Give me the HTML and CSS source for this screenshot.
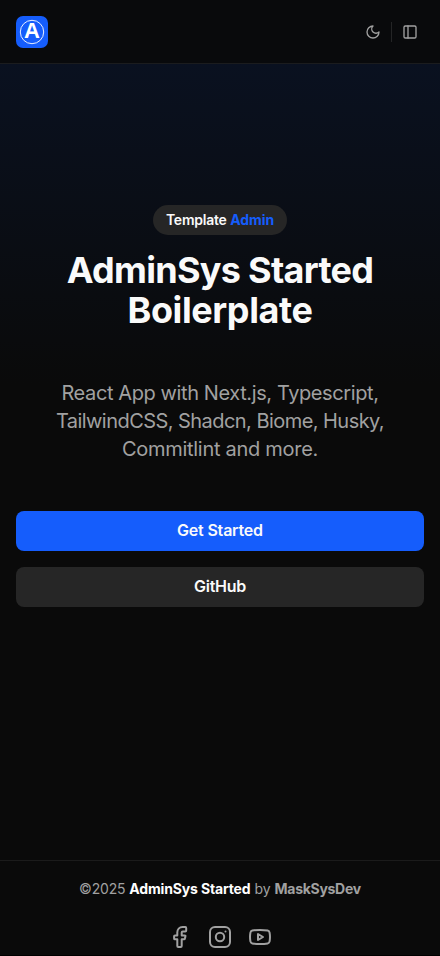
FILE: index.html
```html
<!DOCTYPE html>
<html lang="en">
<head>
<meta charset="utf-8">
<title>AdminSys Started</title>
<link rel="stylesheet" href="styles.css">
</head>
<body>
<div class="page">
  <header class="header">
    <a class="logo" aria-label="Home">
      <svg width="32" height="32" viewBox="0 0 32 32"><rect width="32" height="32" rx="7" fill="#155dfc"/><circle cx="16" cy="16" r="11.7" fill="none" stroke="#fff" stroke-width=".9"/><text class="logo-letter" x="16" y="22" text-anchor="middle">A</text></svg>
    </a>
    <nav class="tools">
      <svg class="tool" viewBox="0 0 24 24"><path d="M12 3a6 6 0 0 0 9 9 9 9 0 1 1-9-9Z"/></svg>
      <span class="divider"></span>
      <svg class="tool" viewBox="0 0 24 24"><rect x="3" y="3" width="18" height="18" rx="2"/><path d="M9 3v18"/></svg>
    </nav>
  </header>
  <main class="hero">
    <div class="badge"><span class="badge-a">Template</span> <span class="badge-b">Admin</span></div>
    <h1 class="title"><span class="title-a">AdminSys Started</span><br><span class="title-b">Boilerplate</span></h1>
    <p class="lead"><span class="lead-a">React App with Next.js, Typescript,</span><br><span class="lead-b">TailwindCSS, Shadcn, Biome, Husky,</span><br><span class="lead-c">Commitlint and more.</span></p>
    <div class="actions">
      <a class="button primary">Get Started</a>
      <a class="button github">GitHub</a>
    </div>
  </main>
  <footer class="footer">
    <p class="credit"><span class="year">©2025</span> <strong class="name">AdminSys Started</strong> <span class="by">by</span> <strong class="author">MaskSysDev</strong></p>
    <div class="socials">
      <svg class="social" viewBox="0 0 24 24"><path d="M7 10.400c-.7 0-.9.2-.9.900v2.100c0 .7.2.900.9.900h2.300v6.800c0 .7.2.900.9.900h2.600c.7 0 .9-.2.900-.9v-6.800h2.300c.6 0 .8-.1.900-.700l.5-2.100c.2-.8 0-1.100-.8-1.100h-2.900V7.600c0-.6.5-1.100 1.100-1.100h2.500c.7 0 .9-.2.900-.9V2.900c0-.7-.2-.9-.9-.900h-2.700C11.300 2 9.300 4.400 9.300 7.500v2.900Z"/></svg>
      <svg class="social" viewBox="0 0 24 24"><rect x="2" y="2" width="20" height="20" rx="5"/><circle cx="12" cy="12" r="4.200"/><path d="M17.500 6.500h.01"/></svg>
      <svg class="social" viewBox="0 0 24 24"><path d="M12 19c2.900 0 5.500-.18 7.700-.6 1.200-.25 1.700-.8 1.900-2 .5-2.900.5-5.900 0-8.800-.2-1.200-.7-1.750-1.900-2-4.400-.8-11-.8-15.400 0-1.200.25-1.700.8-1.900 2-.5 2.900-.5 5.900 0 8.800.2 1.200.7 1.750 1.900 2 2.200.42 4.800.6 7.700.6Z"/><path d="M10 9v6l5-3Z"/></svg>
    </div>
  </footer>
</div>
</body>
</html>
```
FILE: styles.css
```css
* { box-sizing: border-box; }
html { background: #000; }
body { margin: 0; font-family: Inter, "Liberation Sans", sans-serif; color: #fafafa; height: 956px; overflow: hidden; }
.page { height: 955px; display: flex; flex-direction: column; background: #0a0a0a; }
.header { flex: none; height: 64px; padding: 0 16px; display: flex; align-items: center; justify-content: space-between; border-bottom: 1px solid #1b1c1e; background: #090a0c; }
.logo, .logo svg { display: block; }
.logo-letter { font: 700 22px "Liberation Sans", sans-serif; fill: #fff; }
.tools { display: flex; align-items: center; gap: 10px; padding-right: 6px; }
.tool { width: 16px; height: 16px; fill: none; stroke: #a1a1a1; stroke-width: 2; stroke-linecap: round; stroke-linejoin: round; }
.divider { width: 1px; height: 20px; background: #242526; }
.hero { flex: 1; display: flex; flex-direction: column; align-items: center; padding: 141px 16px 0; background: linear-gradient(#0a1120, #0a0a0a 320px); }
.badge { width: 134px; height: 30px; border-radius: 15px; background: #262626; font-size: 14px; line-height: 30px; font-weight: 500; text-align: center; white-space: nowrap; letter-spacing: -.08px; }
.badge-a { font-weight: 600; letter-spacing: -.25px; }
.badge-b { color: #155dfc; font-weight: 700; }
.title { margin: 15px 0 0; font-size: 36px; line-height: 40px; font-weight: 700; text-align: center; white-space: nowrap; }
.title-a { letter-spacing: -.7px; }
.title-b { letter-spacing: -.4px; }
.lead { margin: 49px 0 0; font-size: 20px; line-height: 28px; color: #a1a1a1; text-align: center; white-space: nowrap; }
.lead-a { letter-spacing: -.4px; }
.lead-b { letter-spacing: -.55px; }
.lead-c { letter-spacing: -.28px; }
.actions { width: 100%; margin-top: 48px; display: grid; gap: 16px; }
.button { height: 40px; border-radius: 8px; background: #262626; font-size: 16px; line-height: 38px; font-weight: 600; text-align: center; letter-spacing: -.2px; }
.primary { background: #155dfc; }
.github { letter-spacing: -.3px; }
.footer { flex: none; height: 95px; border-top: 1px solid #1b1b1b; padding-top: 18px; background: #0a0a0a; color: #a1a1a1; }
.credit { margin: 0; font-size: 14px; line-height: 20px; text-align: center; white-space: nowrap; }
.year { letter-spacing: -.2px; }
.name { color: #fff; font-weight: 700; letter-spacing: -.15px; }
.author { font-weight: 700; letter-spacing: -.28px; }
.socials { display: flex; justify-content: center; gap: 16px; margin-top: 26px; }
.social { width: 24px; height: 24px; fill: none; stroke: #a1a1a1; stroke-width: 2; stroke-linecap: round; stroke-linejoin: round; }
```
